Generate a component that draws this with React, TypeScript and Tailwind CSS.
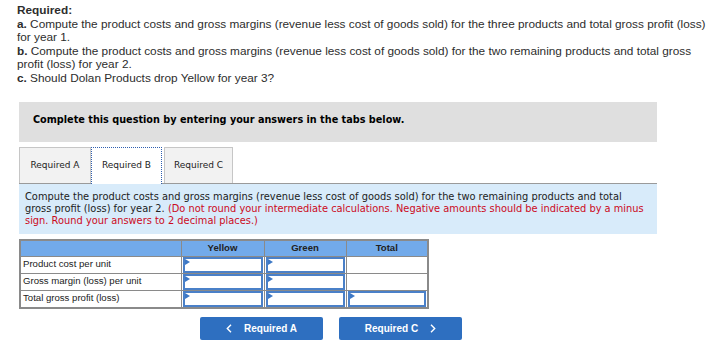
import React from 'react';

const rows = ['Product cost per unit', 'Gross margin (loss) per unit', 'Total gross profit (loss)'];

const InputCell: React.FC<{ empty?: boolean }> = ({ empty }) => {
  if (empty) return <td className="border border-[#8a8a8a] bg-white p-0 h-[17px]" />;
  return (
    <td className="border border-[#8a8a8a] bg-white p-0 h-[17px]">
      <div className="relative h-[16px] mx-[1px] border-2 border-[#4a80c8]">
        <span className="absolute left-0 top-0 w-0 h-0 border-y-[3px] border-y-transparent border-l-[5px] border-l-[#3d78c5]" />
      </div>
    </td>
  );
};

const Chevron: React.FC<{ dir: 'left' | 'right' }> = ({ dir }) => (
  <svg width="6" height="9" viewBox="0 0 6 9" fill="none" stroke="white" strokeWidth="1.4">
    {dir === 'left' ? <path d="M5 0.8 L1.3 4.5 L5 8.2" /> : <path d="M1 0.8 L4.7 4.5 L1 8.2" />}
  </svg>
);

export default function App() {
  return (
    <div className="w-[714px] h-[350px] bg-white overflow-hidden text-[#333]">
      {/* Question text */}
      <div className="ml-[17px] w-[690px] pt-[4px] text-[11.8px] leading-[13.5px] text-[#2d2d2d]" style={{ fontFamily: '"Liberation Sans", Arial, sans-serif' }}>
        <p className="font-bold">Required:</p>
        <p>
          <span className="font-bold">a.</span> Compute the product costs and gross margins (revenue less cost of goods sold) for the three products and total gross profit (loss) for year 1.
        </p>
        <p>
          <span className="font-bold">b.</span> Compute the product costs and gross margins (revenue less cost of goods sold) for the two remaining products and total gross profit (loss) for year 2.
        </p>
        <p>
          <span className="font-bold">c.</span> Should Dolan Products drop Yellow for year 3?
        </p>
      </div>

      <div className="ml-[19px] w-[638px] mt-[17px]">
        {/* Instruction bar */}
        <div className="h-[40px] bg-[#dfdfdf] flex items-center pl-[14px] pb-[4px] text-[9.7px] font-bold text-black" style={{ fontFamily: '"DejaVu Sans", Verdana, sans-serif' }}>
          Complete this question by entering your answers in the tabs below.
        </div>

        {/* Tabs */}
        <div className="mt-[5px] flex items-end h-[37px] border-b border-[#9a9a9a]" style={{ fontFamily: '"DejaVu Sans", Verdana, sans-serif' }}>
          <div className="w-[72px] h-[36px] bg-[#f2f2f2] border border-b-0 border-[#c6c6c6] flex items-center justify-center text-[9px] text-[#222]">Required A</div>
          <div className="w-[71px] h-[37px] -mb-px bg-white border border-dotted border-b-0 border-[#2f5fb0] flex items-center justify-center text-[9px] text-[#222]">Required B</div>
          <div className="ml-[2px] w-[69px] h-[36px] bg-[#f2f2f2] border border-b-0 border-[#c6c6c6] flex items-center justify-center text-[9px] text-[#222]">Required C</div>
        </div>

        {/* Instructions panel */}
        <div className="h-[50px] bg-[#d8ebfa] pl-[6px] pt-[7px] pr-[10px] text-[9.85px] leading-[12px] text-[#222]" style={{ fontFamily: '"DejaVu Sans", Verdana, sans-serif' }}>
          Compute the product costs and gross margins (revenue less cost of goods sold) for the two remaining products and total gross profit (loss) for year 2.{' '}
          <span className="text-[#cc0a1c]">(Do not round your intermediate calculations. Negative amounts should be indicated by a minus sign. Round your answers to 2 decimal places.)</span>
        </div>

        {/* Table */}
        <table className="mt-[5px] w-[408px] border-collapse border-2 border-[#8a8a8a] text-[9.6px] text-[#222] table-fixed" style={{ fontFamily: '"Liberation Sans", Arial, sans-serif' }}>
          <colgroup>
            <col className="w-[161px]" />
            <col className="w-[83px]" />
            <col className="w-[82px]" />
            <col className="w-[82px]" />
          </colgroup>
          <thead>
            <tr className="bg-[#72aaea] h-[16px]">
              <th className="border border-[#8a8a8a] leading-[14px]" />
              <th className="border border-[#8a8a8a] leading-[14px] font-bold text-[#222]">Yellow</th>
              <th className="border border-[#8a8a8a] leading-[14px] font-bold text-[#222]">Green</th>
              <th className="border border-[#8a8a8a] leading-[14px] font-bold text-[#222]">Total</th>
            </tr>
          </thead>
          <tbody>
            {rows.map((r, i) => (
              <tr key={r} className="h-[17px]">
                <td className="border border-[#8a8a8a] bg-white pl-[2px] text-left whitespace-nowrap">{r}</td>
                <InputCell />
                <InputCell />
                <InputCell empty={i < 2} />
              </tr>
            ))}
          </tbody>
        </table>

        {/* Navigation */}
        <div className="mt-[8px] ml-[181px] flex gap-[16px] text-[10px] font-bold text-white" style={{ fontFamily: '"Liberation Sans", Arial, sans-serif' }}>
          <button className="w-[123px] h-[23px] bg-[#2e6fc0] rounded-[2px] flex items-center justify-center gap-[12px]">
            <Chevron dir="left" />
            <span>Required A</span>
          </button>
          <button className="w-[123px] h-[23px] bg-[#2e6fc0] rounded-[2px] flex items-center justify-center gap-[12px]">
            <span>Required C</span>
            <Chevron dir="right" />
          </button>
        </div>
      </div>
    </div>
  );
}
